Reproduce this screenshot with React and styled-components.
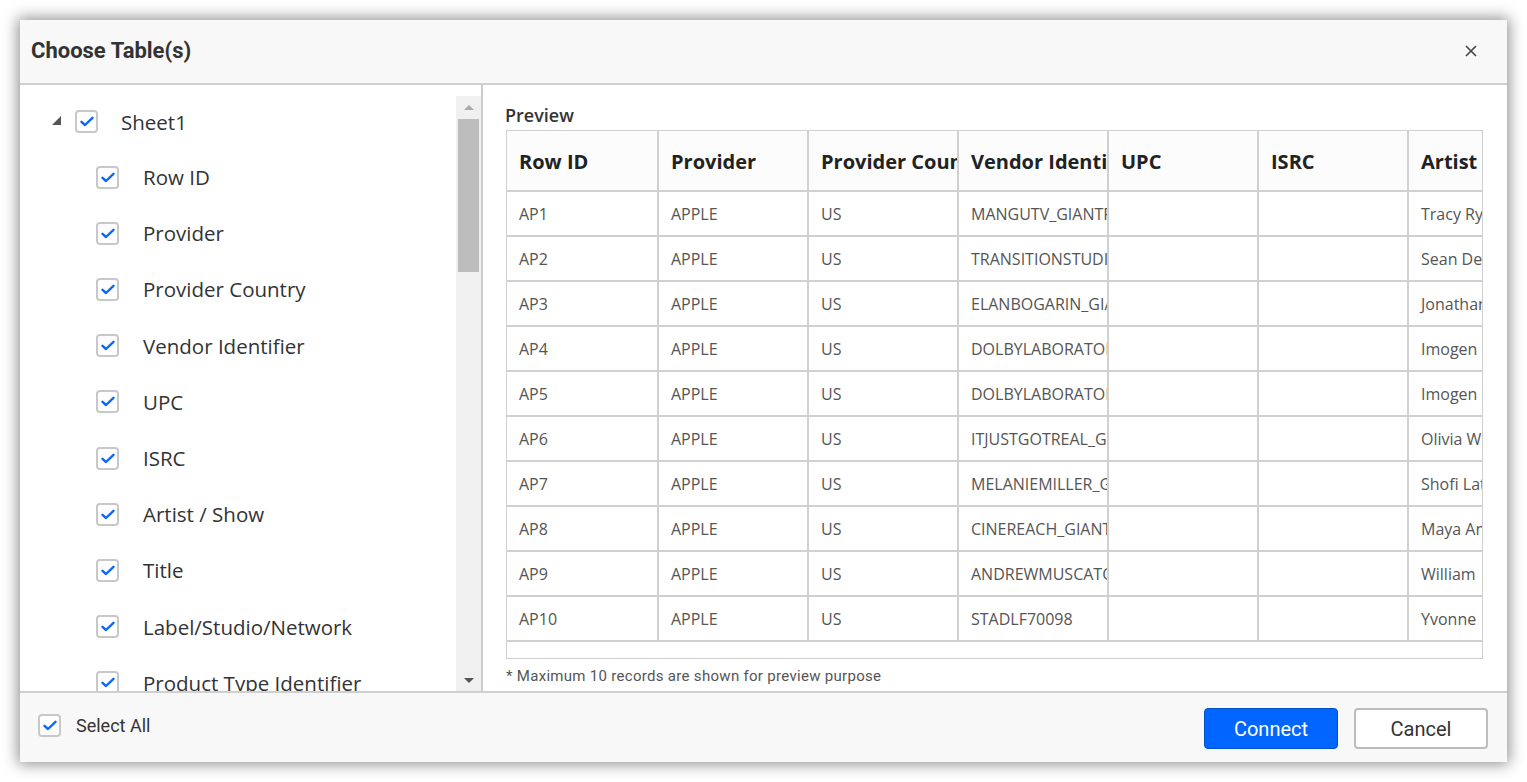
import React from 'react';
import styled, { createGlobalStyle } from 'styled-components';

const Global = createGlobalStyle`
    html, body {
        margin: 0;
        padding: 0;
        background: #ffffff;
    }
    * {
        box-sizing: border-box;
    }
`

const fields = [
    'Row ID', 'Provider', 'Provider Country', 'Vendor Identifier', 'UPC', 'ISRC',
    'Artist / Show', 'Title', 'Label/Studio/Network', 'Product Type Identifier',
];

const columns = ['Row ID', 'Provider', 'Provider Country', 'Vendor Identifier', 'UPC', 'ISRC', 'Artist / Show'];

const rows = [
    ['AP1', 'APPLE', 'US', 'MANGUTV_GIANTPICTURES', '', '', 'Tracy Ryan'],
    ['AP2', 'APPLE', 'US', 'TRANSITIONSTUDIOS', '', '', 'Sean Dennis'],
    ['AP3', 'APPLE', 'US', 'ELANBOGARIN_GIANT', '', '', 'Jonathan'],
    ['AP4', 'APPLE', 'US', 'DOLBYLABORATORIES', '', '', 'Imogen Heap'],
    ['AP5', 'APPLE', 'US', 'DOLBYLABORATORIES', '', '', 'Imogen Heap'],
    ['AP6', 'APPLE', 'US', 'ITJUSTGOTREAL_GIANT', '', '', 'Olivia Wilde'],
    ['AP7', 'APPLE', 'US', 'MELANIEMILLER_GIANT', '', '', 'Shofi Latif'],
    ['AP8', 'APPLE', 'US', 'CINEREACH_GIANT', '', '', 'Maya Angelou'],
    ['AP9', 'APPLE', 'US', 'ANDREWMUSCATO', '', '', 'William'],
    ['AP10', 'APPLE', 'US', 'STADLF70098', '', '', 'Yvonne'],
];

function Check() {
    return (
        <Box>
            <svg width="14" height="11" viewBox="0 0 14 11">
                <path d="M1.5 5.8 L5 9 L12.5 1.8" fill="none" stroke="#0a66ff" strokeWidth="2.4" strokeLinecap="round" strokeLinejoin="round" />
            </svg>
        </Box>
    );
}

export default function App() {
    return (
        <>
            <Global />
            <Dialog>
                <Header>
                    <Title>Choose Table(s)</Title>
                    <Close>
                        <svg width="12" height="12" viewBox="0 0 12 12">
                            <path d="M1 1 L11 11 M11 1 L1 11" stroke="#444" strokeWidth="1.6" />
                        </svg>
                    </Close>
                </Header>
                <Body>
                    <Side>
                        <Tree>
                            <TreeRow>
                                <Caret />
                                <Check />
                                <SheetName>Sheet1</SheetName>
                            </TreeRow>
                            {fields.map((f) => (
                                <TreeRow key={f} $child>
                                    <Check />
                                    <FieldName>{f}</FieldName>
                                </TreeRow>
                            ))}
                        </Tree>
                        <Scrollbar>
                            <Arrow $up />
                            <Thumb />
                            <Track />
                            <Arrow />
                        </Scrollbar>
                    </Side>
                    <Main>
                        <PreviewLabel>Preview</PreviewLabel>
                        <TableWrap>
                            <Grid>
                                {columns.map((c) => (
                                    <HeadCell key={c}>{c}</HeadCell>
                                ))}
                                {rows.map((r) =>
                                    r.map((v, i) => <Cell key={r[0] + i}>{v}</Cell>)
                                )}
                            </Grid>
                            <HScroll />
                        </TableWrap>
                        <Note>* Maximum 10 records are shown for preview purpose</Note>
                    </Main>
                </Body>
                <Footer>
                    <SelectAll>
                        <Check />
                        <span>Select All</span>
                    </SelectAll>
                    <Buttons>
                        <Button $primary>Connect</Button>
                        <Button>Cancel</Button>
                    </Buttons>
                </Footer>
            </Dialog>
        </>
    );
}

const Dialog = styled.div`
    margin: 20px;
    width: 1487px;
    height: 742px;
    background: #ffffff;
    box-shadow: 0 0 14px 2px rgba(0, 0, 0, 0.45);
    display: flex;
    flex-direction: column;
    overflow: hidden;
`
const Header = styled.div`
    height: 65px;
    flex: none;
    background: #f8f8f8;
    border-bottom: 2px solid #cfcfcf;
    display: flex;
    align-items: center;
    justify-content: space-between;
    padding: 0 30px 0 11px;
`
const Title = styled.div`
    font-family: Roboto, 'Liberation Sans', sans-serif;
    font-weight: bold;
    font-size: 22px;
    color: #333333;
    padding-bottom: 2px;
`
const Close = styled.div`
    display: flex;
    width: 12px;
    height: 12px;
    margin-bottom: 2px;
`
const Body = styled.div`
    flex: 1;
    display: flex;
    min-height: 0;
`
const Side = styled.div`
    width: 463px;
    flex: none;
    display: flex;
    border-right: 2px solid #cccccc;
    overflow: hidden;
`
const Tree = styled.div`
    flex: 1;
    padding: 9px 0 0 32px;
    overflow: hidden;
`
const TreeRow = styled.div`
    height: ${(p) => (p.$child ? '56.2px' : '55px')};
    display: flex;
    align-items: center;
    padding-left: ${(p) => (p.$child ? '44px' : '0')};
    gap: ${(p) => (p.$child ? '24px' : '23px')};
    flex-shrink: 0;
`
const Caret = styled.div`
    width: 0;
    height: 0;
    border-left: 9px solid transparent;
    border-bottom: 9px solid #555;
    margin-right: -9px;
    margin-top: -3px;
`
const Box = styled.div`
    width: 23px;
    height: 23px;
    flex: none;
    border: 2px solid #c8c8c8;
    border-radius: 4px;
    background: #fff;
    display: flex;
    align-items: center;
    justify-content: center;
`
const SheetName = styled.span`
    font-family: 'Open Sans', 'Liberation Sans', sans-serif;
    font-size: 20.5px;
    color: #333;
`
const FieldName = styled.span`
    font-family: 'Open Sans', 'Liberation Sans', sans-serif;
    font-size: 20.5px;
    color: #333;
    white-space: nowrap;
`
const Scrollbar = styled.div`
    width: 25px;
    flex: none;
    margin-top: 11px;
    background: #f0f0f0;
    display: flex;
    flex-direction: column;
    align-items: center;
`
const Arrow = styled.div`
    width: 0;
    height: 0;
    margin: ${(p) => (p.$up ? '9px 0 9px' : '0 0 8px')};
    border-left: 5px solid transparent;
    border-right: 5px solid transparent;
    ${(p) => (p.$up ? 'border-bottom: 5px solid #aaa;' : 'border-top: 5px solid #555;')}
`
const Thumb = styled.div`
    width: 21px;
    height: 153px;
    background: #bdbdbd;
`
const Track = styled.div`
    flex: 1;
`
const Main = styled.div`
    flex: 1;
    padding: 0 24px 0 23px;
    display: flex;
    flex-direction: column;
    min-width: 0;
`
const PreviewLabel = styled.div`
    font-family: 'Open Sans', 'Liberation Sans', sans-serif;
    font-weight: 600;
    font-size: 18px;
    color: #333;
    margin-top: 18px;
    margin-left: -1px;
    line-height: 24px;
    height: 27px;
`
const TableWrap = styled.div`
    border: 1px solid #cfcfcf;
    overflow: hidden;
`
const Grid = styled.div`
    display: grid;
    grid-template-columns: 152px repeat(6, 150px);
    grid-auto-rows: 45px;
    grid-template-rows: 61px;
    width: max-content;
`
const HeadCell = styled.div`
    font-family: 'Open Sans', 'Liberation Sans', sans-serif;
    font-weight: bold;
    font-size: 20px;
    color: #222;
    background: #fcfcfc;
    border-right: 2px solid #d0d0d0;
    border-bottom: 2px solid #d0d0d0;
    padding: 2px 0 0 12px;
    display: flex;
    align-items: center;
    white-space: nowrap;
    overflow: hidden;
`
const Cell = styled.div`
    font-family: 'Open Sans', 'Liberation Sans', sans-serif;
    font-size: 16px;
    color: #555;
    border-right: 2px solid #d0d0d0;
    border-bottom: 2px solid #d0d0d0;
    padding: 0 0 0 12px;
    display: flex;
    align-items: center;
    white-space: nowrap;
    overflow: hidden;
`
const HScroll = styled.div`
    height: 16px;
`
const Note = styled.div`
    font-family: Roboto, 'Liberation Sans', sans-serif;
    font-size: 15px;
    color: #555;
    margin-top: 8px;
    letter-spacing: 0.3px;
`
const Footer = styled.div`
    height: 71px;
    flex: none;
    background: #f8f8f8;
    border-top: 2px solid #cfcfcf;
    display: flex;
    align-items: center;
    justify-content: space-between;
    padding: 0 19px 2px 18px;
`
const SelectAll = styled.div`
    display: flex;
    align-items: center;
    gap: 15px;
    font-family: Roboto, 'Liberation Sans', sans-serif;
    font-size: 18px;
    color: #333;
    margin-bottom: 2px;
`
const Buttons = styled.div`
    display: flex;
    gap: 16px;
    margin-top: 4px;
`
const Button = styled.button`
    width: 134px;
    height: 41px;
    border-radius: 4px;
    font-family: Roboto, 'Liberation Sans', sans-serif;
    font-size: 20px;
    cursor: pointer;
    background: ${(p) => (p.$primary ? '#0066ff' : '#ffffff')};
    color: ${(p) => (p.$primary ? '#ffffff' : '#333333')};
    border: ${(p) => (p.$primary ? '1px solid #0052cc' : '2px solid #bdbdbd')};
`
